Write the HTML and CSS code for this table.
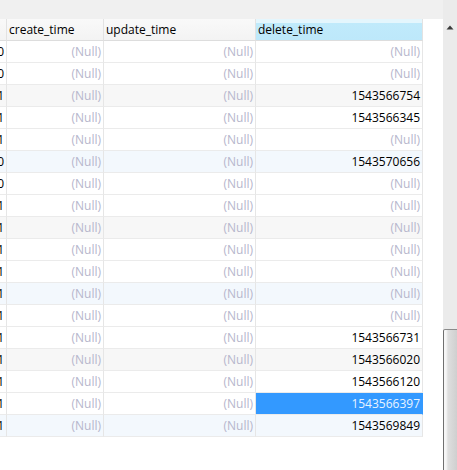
FILE: index.html
```html
<!DOCTYPE html>
<html>
<head>
<meta charset="utf-8">
<link rel="stylesheet" href="styles.css">
</head>
<body>
<div class="window">
  <div class="main">
    <div class="topband"></div>
    <div class="grid">
      <div class="row head">
        <div class="cell c0"></div>
        <div class="cell">create_time</div>
        <div class="cell">update_time</div>
        <div class="cell active">delete_time</div>
      </div>
      <div class="row"><div class="cell c0">0</div><div class="cell null">(Null)</div><div class="cell null">(Null)</div><div class="cell null">(Null)</div></div>
      <div class="row"><div class="cell c0">0</div><div class="cell null">(Null)</div><div class="cell null">(Null)</div><div class="cell null">(Null)</div></div>
      <div class="row gray"><div class="cell c0">1</div><div class="cell null">(Null)</div><div class="cell null">(Null)</div><div class="cell">1543566754</div></div>
      <div class="row"><div class="cell c0">1</div><div class="cell null">(Null)</div><div class="cell null">(Null)</div><div class="cell">1543566345</div></div>
      <div class="row"><div class="cell c0">1</div><div class="cell null">(Null)</div><div class="cell null">(Null)</div><div class="cell null">(Null)</div></div>
      <div class="row blue"><div class="cell c0">0</div><div class="cell null">(Null)</div><div class="cell null">(Null)</div><div class="cell">1543570656</div></div>
      <div class="row"><div class="cell c0">0</div><div class="cell null">(Null)</div><div class="cell null">(Null)</div><div class="cell null">(Null)</div></div>
      <div class="row"><div class="cell c0">1</div><div class="cell null">(Null)</div><div class="cell null">(Null)</div><div class="cell null">(Null)</div></div>
      <div class="row gray"><div class="cell c0">1</div><div class="cell null">(Null)</div><div class="cell null">(Null)</div><div class="cell null">(Null)</div></div>
      <div class="row"><div class="cell c0">1</div><div class="cell null">(Null)</div><div class="cell null">(Null)</div><div class="cell null">(Null)</div></div>
      <div class="row"><div class="cell c0">1</div><div class="cell null">(Null)</div><div class="cell null">(Null)</div><div class="cell null">(Null)</div></div>
      <div class="row blue"><div class="cell c0">1</div><div class="cell null">(Null)</div><div class="cell null">(Null)</div><div class="cell null">(Null)</div></div>
      <div class="row"><div class="cell c0">1</div><div class="cell null">(Null)</div><div class="cell null">(Null)</div><div class="cell null">(Null)</div></div>
      <div class="row"><div class="cell c0">1</div><div class="cell null">(Null)</div><div class="cell null">(Null)</div><div class="cell">1543566731</div></div>
      <div class="row gray"><div class="cell c0">1</div><div class="cell null">(Null)</div><div class="cell null">(Null)</div><div class="cell">1543566020</div></div>
      <div class="row"><div class="cell c0">1</div><div class="cell null">(Null)</div><div class="cell null">(Null)</div><div class="cell">1543566120</div></div>
      <div class="row"><div class="cell c0">1</div><div class="cell null">(Null)</div><div class="cell null">(Null)</div><div class="cell selected">1543566397</div></div>
      <div class="row blue"><div class="cell c0">1</div><div class="cell null">(Null)</div><div class="cell null">(Null)</div><div class="cell">1543569849</div></div>
    </div>
  </div>
  <div class="scrollbar">
    <svg class="arrow" width="14" height="5" viewBox="0 0 14 5"><polygon points="3.5,4.5 10.5,4.5 7,0.5" fill="#3a3a3a"/></svg>
    <div class="thumb"></div>
  </div>
</div>
</body>
</html>
```

FILE: styles.css
```css
html, body {
  margin: 0;
  padding: 0;
  background: #ffffff;
}

body {
  font-family: "Open Sans", "Noto Sans", sans-serif;
  font-size: 12px;
  color: #000000;
}

.window {
  display: flex;
  width: 457px;
  height: 470px;
  overflow: hidden;
}

.main {
  width: 443px;
  display: flex;
  flex-direction: column;
  background: #ffffff;
}

.topband {
  height: 19px;
  background: #f0f0f0;
  flex: none;
}

.grid {
  display: flex;
  flex-direction: column;
  width: 423px;
}

.row {
  display: grid;
  grid-template-columns: 7px 97px 152px 167px;
  height: 22px;
  background: #ffffff;
}

.row.gray {
  background: #f7f7f7;
}

.row.blue {
  background: #f3f8fd;
}

.cell {
  box-sizing: border-box;
  height: 22px;
  line-height: 21px;
  padding: 0 2px;
  border-right: 1px solid #e6e6e6;
  border-bottom: 1px solid #ebebeb;
  overflow: hidden;
  white-space: nowrap;
  display: flex;
  justify-content: flex-end;
}

.cell.c0 {
  padding-left: 0;
}

.cell.null {
  color: #b6b6cc;
}

.cell.selected {
  background: #3399ff;
  color: #e8f3ff;
  border-right-color: #3399ff;
}

.head .cell {
  justify-content: flex-start;
  background: linear-gradient(#f9f9f9, #f3f3f3);
  border-bottom-color: #dddddd;
  border-right-color: #e2e2e2;
}

.head .cell.active {
  background: linear-gradient(#e4f6fd 0, #e4f6fd 4px, #c0eafb 4px, #bde8fa 100%);
}

.scrollbar {
  width: 14px;
  background: #ebebeb;
  display: flex;
  flex-direction: column;
}

.arrow {
  display: block;
  margin-top: 25px;
  flex: none;
}

.thumb {
  margin-top: 299px;
  flex: 1;
  border-top: 1px solid #8a8a8a;
  border-left: 1px solid #6f6f6f;
  border-top-left-radius: 2px;
  background: linear-gradient(to right, #f6f6f6 0, #f6f6f6 2px, #dedede 4px, #d6d6d6 9px, #cfcfcf 100%);
}
```
